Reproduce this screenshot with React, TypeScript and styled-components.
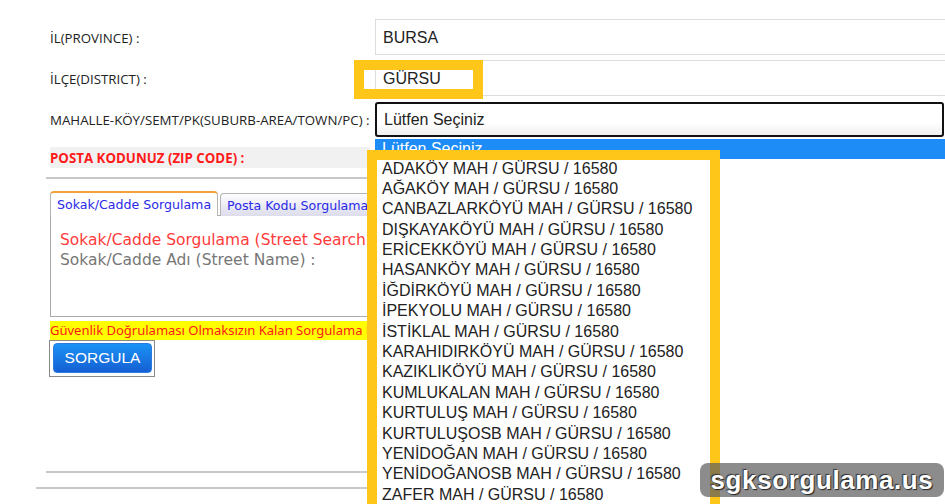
import React from "react";
import styled, { createGlobalStyle } from "styled-components";

const GlobalStyle = createGlobalStyle`
    html, body {
        margin: 0;
        padding: 0;
        background: #fff;
        overflow: hidden;
    }
`;

const Page = styled.div`
    position: relative;
    width: 945px;
    height: 504px;
    overflow: hidden;
    background: #fff;
`;

const Form = styled.div`
    padding: 19px 0 0 50px;
`;

const FieldRow = styled.div`
    display: grid;
    grid-template-columns: 325px 1fr;
    align-items: center;
    height: 36px;
    margin-bottom: 5px;
`;

const Label = styled.div`
    font-family: "Open Sans", "Noto Sans", sans-serif;
    font-size: 13.3px;
    color: #222;
    white-space: nowrap;
    padding-top: 1px;
`;

const SelectBox = styled.div<{ $focused?: boolean }>`
    position: relative;
    box-sizing: border-box;
    height: ${(p) => (p.$focused ? "35px" : "36px")};
    display: flex;
    align-items: center;
    padding: 2px 0 0 7px;
    margin-right: ${(p) => (p.$focused ? "1px" : "-10px")};
    font-family: "Liberation Sans", Arial, sans-serif;
    font-size: 16px;
    color: #222;
    background: ${(p) =>
        p.$focused ? "linear-gradient(#fff 60%, #f0f0f0)" : "#fff"};
    border: ${(p) => (p.$focused ? "2px solid #111" : "1px solid #ddd")};
    border-radius: ${(p) => (p.$focused ? "3px" : "0")};
`;

const OptionList = styled.div`
    position: absolute;
    top: calc(100% + 4px);
    left: -2px;
    width: 572px;
    height: 380px;
    background: #fff;
    z-index: 2;
`;

const Option = styled.div<{ $selected?: boolean }>`
    height: ${(p) => (p.$selected ? "20px" : "20.4px")};
    line-height: ${(p) => (p.$selected ? "20px" : "20.4px")};
    padding-left: 7px;
    font-family: "Liberation Sans", Arial, sans-serif;
    font-size: 16px;
    white-space: nowrap;
    color: ${(p) => (p.$selected ? "#fff" : "#222")};
    background: ${(p) => (p.$selected ? "#1e8cf6" : "#fff")};
`;

const Lower = styled.div`
    width: 334px;
    margin-left: -14px;
    padding-left: 14px;
    box-sizing: border-box;
    overflow: hidden;
`;

const ZipRow = styled.div`
    margin-top: 5px;
    height: 21px;
    display: flex;
    align-items: center;
    background: #f1f1f1;
    font-family: "Open Sans", "Noto Sans", sans-serif;
    font-size: 13.3px;
    font-weight: 700;
    color: #ff1a1a;
    white-space: nowrap;
`;

const Rule = styled.div<{ $shift: number }>`
    margin-left: -${(p) => p.$shift}px;
    border-top: 2px solid #c8c8c8;
`;

const TabBar = styled.div`
    display: flex;
    gap: 2px;
    margin-top: 12px;
    align-items: flex-end;
`;

const Tab = styled.div<{ $active?: boolean }>`
    box-sizing: border-box;
    flex-shrink: 0;
    height: ${(p) => (p.$active ? "25px" : "23px")};
    padding: 0 6px;
    display: flex;
    align-items: center;
    font-family: "DejaVu Sans", Verdana, sans-serif;
    font-size: 12.6px;
    color: #2a2ae8;
    white-space: nowrap;
    border: 1px solid #b4b4b4;
    border-top: ${(p) => (p.$active ? "2px solid #f2a43a" : "1px solid #b4b4b4")};
    border-bottom: none;
    border-radius: 4px 4px 0 0;
    background: ${(p) =>
        p.$active ? "#fff" : "linear-gradient(#fdfdff, #dcdcec)"};
    margin-bottom: -1px;
`;

const Panel = styled.div`
    box-sizing: border-box;
    width: 400px;
    height: 102px;
    border: 1px solid #aaa;
    padding: 14px 9px;
    font-family: "DejaVu Sans", Verdana, sans-serif;
    font-size: 15.5px;
    line-height: 20px;
`;

const PanelTitle = styled.div`
    color: #ff3b3b;
    white-space: nowrap;
`;

const PanelField = styled.div`
    color: #777;
    white-space: nowrap;
`;

const Notice = styled.div`
    margin-top: 4px;
    height: 19px;
    line-height: 19px;
    background: #ffff00;
    color: #ff1a1a;
    font-family: "Noto Sans", "Open Sans", sans-serif;
    font-size: 13px;
    white-space: nowrap;
`;

const ButtonFrame = styled.div`
    display: inline-block;
    margin-left: -1px;
    padding: 2px 2px 3px 3px;
    border: 1px solid #8a8a8a;
`;

const Button = styled.button`
    display: block;
    width: 99px;
    height: 30px;
    border: 1px solid #2b7be0;
    border-radius: 4px;
    background: linear-gradient(#1b92f5, #155fd3);
    color: #fff;
    font-family: "Liberation Sans", Arial, sans-serif;
    font-size: 15.5px;
    padding: 0;
`;

const FooterLines = styled.div`
    margin-top: 94px;
    display: flex;
    flex-direction: column;
    gap: 14px;
`;

const Highlight = styled.div<{ $x: number; $y: number; $w: number; $h: number }>`
    position: absolute;
    left: ${(p) => p.$x}px;
    top: ${(p) => p.$y}px;
    width: ${(p) => p.$w}px;
    height: ${(p) => p.$h}px;
    box-sizing: border-box;
    border: 10px solid #ffc61a;
    z-index: 3;
`;

const Watermark = styled.div`
    position: absolute;
    left: 700px;
    top: 463px;
    width: 244px;
    height: 34px;
    border-radius: 8px;
    background: rgba(95, 95, 95, 0.72);
    display: flex;
    align-items: center;
    justify-content: center;
    font-family: "Liberation Sans", Arial, sans-serif;
    font-weight: 700;
    font-size: 26px;
    letter-spacing: 0.6px;
    color: #fff;
    text-shadow: 1px 1px 1px #222, -1px -1px 1px #333;
    z-index: 4;
`;

const neighbourhoods = [
    "ADAKÖY",
    "AĞAKÖY",
    "CANBAZLARKÖYÜ",
    "DIŞKAYAKÖYÜ",
    "ERİCEKKÖYÜ",
    "HASANKÖY",
    "İĞDİRKÖYÜ",
    "İPEKYOLU",
    "İSTİKLAL",
    "KARAHIDIRKÖYÜ",
    "KAZIKLIKÖYÜ",
    "KUMLUKALAN",
    "KURTULUŞ",
    "KURTULUŞOSB",
    "YENİDOĞAN",
    "YENİDOĞANOSB",
    "ZAFER",
];

export default function App() {
    return (
        <>
            <GlobalStyle />
            <Page>
                <Form>
                    <FieldRow>
                        <Label>İL(PROVINCE) :</Label>
                        <SelectBox>BURSA</SelectBox>
                    </FieldRow>
                    <FieldRow>
                        <Label>İLÇE(DISTRICT) :</Label>
                        <SelectBox>GÜRSU</SelectBox>
                    </FieldRow>
                    <FieldRow>
                        <Label>MAHALLE-KÖY/SEMT/PK(SUBURB-AREA/TOWN/PC) :</Label>
                        <SelectBox $focused>
                            Lütfen Seçiniz
                            <OptionList>
                                <Option $selected>Lütfen Seçiniz</Option>
                                {neighbourhoods.map((name) => (
                                    <Option key={name}>
                                        {name} MAH / GÜRSU / 16580
                                    </Option>
                                ))}
                            </OptionList>
                        </SelectBox>
                    </FieldRow>
                    <Lower>
                        <ZipRow>POSTA KODUNUZ (ZIP CODE) :</ZipRow>
                        <Rule $shift={4} style={{ marginTop: 9 }} />
                        <TabBar>
                            <Tab $active>Sokak/Cadde Sorgulama</Tab>
                            <Tab>Posta Kodu Sorgulama</Tab>
                        </TabBar>
                        <Panel>
                            <PanelTitle>Sokak/Cadde Sorgulama (Street Search)</PanelTitle>
                            <PanelField>Sokak/Cadde Adı (Street Name) :</PanelField>
                        </Panel>
                        <Notice>
                            Güvenlik Doğrulaması Olmaksızın Kalan Sorgulama Hakkınız
                        </Notice>
                        <ButtonFrame>
                            <Button>SORGULA</Button>
                        </ButtonFrame>
                        <FooterLines>
                            <Rule $shift={4} />
                            <Rule $shift={14} />
                        </FooterLines>
                    </Lower>
                </Form>
                <Highlight $x={354} $y={60} $w={129} $h={39} />
                <Highlight $x={367} $y={150} $w={353} $h={370} />
                <Watermark>sgksorgulama.us</Watermark>
            </Page>
        </>
    );
}
